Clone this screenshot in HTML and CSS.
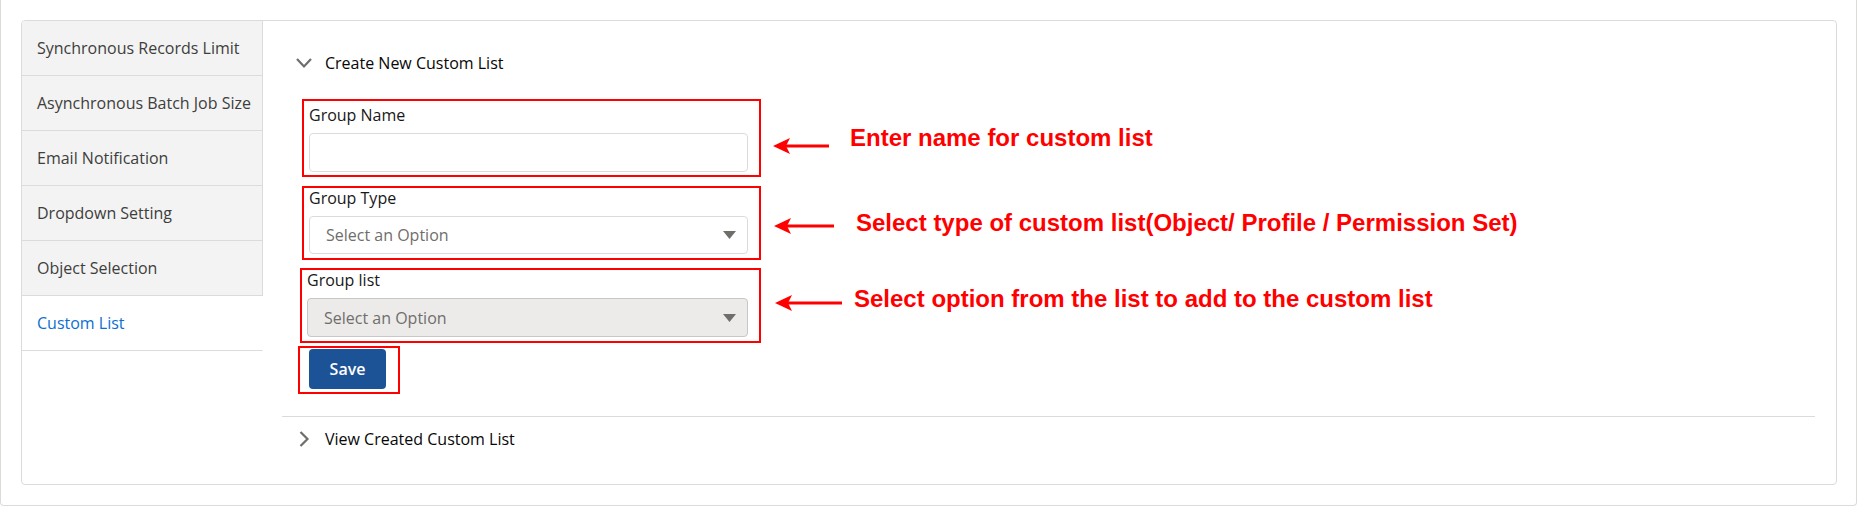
FILE: index.html
```html
<!DOCTYPE html>
<html lang="en">
<head>
    <meta charset="UTF-8">
    <meta name="viewport" content="width=device-width, initial-scale=1.0">
    <title>Custom List Settings</title>
    <link rel="stylesheet" href="styles.css">
</head>
<body>

<div class="page">
    <div class="card">

        <nav class="tabs">
            <a class="tab">Synchronous Records Limit</a>
            <a class="tab">Asynchronous Batch Job Size</a>
            <a class="tab">Email Notification</a>
            <a class="tab">Dropdown Setting</a>
            <a class="tab">Object Selection</a>
            <a class="tab tab-active">Custom List</a>
        </nav>

        <div class="content">
            <section class="section section-open">
                <div class="section-head">
                    <svg class="chevron" width="16" height="16" viewBox="0 0 16 16">
                        <path d="M1 4 L8 11.5 L15 4" fill="none" stroke="#706e6b" stroke-width="2.2"/>
                    </svg>
                    <span>Create New Custom List</span>
                </div>

                <div class="form">
                    <div class="row row-name">
                        <div class="callout callout-name">
                            <label class="field-label">Group Name</label>
                            <input class="input" type="text">
                        </div>
                        <svg class="arrow arrow-name" width="56" height="18" viewBox="0 0 56 18">
                            <path d="M0 9 L17 1 L13 9 L17 17 Z" fill="#ff0000"/>
                            <rect x="12" y="7.5" width="44" height="3" fill="#ff0000"/>
                        </svg>
                        <span class="note note-name">Enter name for custom list</span>
                    </div>

                    <div class="row row-type">
                        <div class="callout">
                            <label class="field-label">Group Type</label>
                            <div class="select">
                                <span>Select an Option</span>
                                <svg width="13" height="8" viewBox="0 0 13 8"><path d="M0 0 H13 L6.5 8 Z" fill="#706e6b"/></svg>
                            </div>
                        </div>
                        <svg class="arrow arrow-type" width="60" height="18" viewBox="0 0 60 18">
                            <path d="M0 9 L17 1 L13 9 L17 17 Z" fill="#ff0000"/>
                            <rect x="12" y="7.5" width="48" height="3" fill="#ff0000"/>
                        </svg>
                        <span class="note note-type">Select type of custom list(Object/ Profile / Permission Set)</span>
                    </div>

                    <div class="row row-list">
                        <div class="callout callout-list">
                            <label class="field-label">Group list</label>
                            <div class="select select-disabled">
                                <span>Select an Option</span>
                                <svg width="13" height="8" viewBox="0 0 13 8"><path d="M0 0 H13 L6.5 8 Z" fill="#706e6b"/></svg>
                            </div>
                        </div>
                        <svg class="arrow arrow-list" width="67" height="18" viewBox="0 0 67 18">
                            <path d="M0 9 L17 1 L13 9 L17 17 Z" fill="#ff0000"/>
                            <rect x="12" y="7.5" width="55" height="3" fill="#ff0000"/>
                        </svg>
                        <span class="note note-list">Select option from the list to add to the custom list</span>
                    </div>

                    <div class="row row-save">
                        <div class="callout callout-save">
                            <button class="btn">Save</button>
                        </div>
                    </div>
                </div>
            </section>

            <section class="section">
                <div class="section-head">
                    <svg class="chevron" width="16" height="16" viewBox="0 0 16 16">
                        <path d="M4.5 1 L11.5 8 L4.5 15" fill="none" stroke="#706e6b" stroke-width="2.2"/>
                    </svg>
                    <span>View Created Custom List</span>
                </div>
            </section>
        </div>

    </div>
</div>

</body>
</html>
```

FILE: styles.css
```css
body {
    margin: 0;
    background: #fff;
    font-family: "Open Sans", Arial, sans-serif;
    font-size: 16px;
    color: #080707;
}

.page {
    margin-right: 1px;
    padding: 20px 19px 20px 20px;
    border: 1px solid #dddbda;
    border-top: none;
    border-radius: 0 0 4px 4px;
}

.card {
    display: flex;
    height: 465px;
    box-sizing: border-box;
    border: 1px solid #dddbda;
    border-radius: 4px;
    overflow: hidden;
}

/* Vertical tabs */
.tabs {
    width: 241px;
    flex-shrink: 0;
}
.tab {
    display: flex;
    align-items: center;
    height: 54px;
    padding-left: 15px;
    background: #f3f3f3;
    border-right: 1px solid #dddbda;
    border-bottom: 1px solid #dddbda;
    color: #3e3e3c;
    cursor: pointer;
}
.tab-active {
    background: #fff;
    border-right-color: transparent;
    color: #0b6fd1;
}

/* Accordion */
.content {
    flex: 1;
    padding: 21px 21px 0 19px;
}
.section-open {
    border-bottom: 1px solid #dddbda;
    padding-bottom: 22px;
}
.section-head {
    display: flex;
    align-items: center;
    gap: 13px;
    height: 42px;
    padding-left: 14px;
    color: #080707;
}
.section-open + .section .section-head {
    height: 44px;
}

/* Form */
.form {
    padding: 15px 0 0 20px;
}
.row {
    display: flex;
    align-items: center;
    margin-bottom: 8px;
}
.row-name {
    margin-bottom: 9px;
}
.row-list {
    margin-bottom: 3px;
}
.row-save {
    margin-bottom: 0;
}
.callout {
    width: 459px;
    box-sizing: border-box;
    border: 2px solid #ff0000;
    padding: 1px 11px 4px 5px;
}
.callout-name {
    padding-top: 5px;
    padding-bottom: 3px;
}
.callout-list {
    margin-left: -2px;
    width: 461px;
}
.callout-save {
    width: auto;
    margin-left: -4px;
    padding: 1px 12px 3px 9px;
}
.field-label {
    display: block;
    line-height: 18px;
    margin-bottom: 9px;
    font-size: 16px;
    color: #181818;
}
.input {
    display: block;
    width: 100%;
    height: 39px;
    box-sizing: border-box;
    border: 1px solid #dddbda;
    border-radius: 4px;
    font-family: inherit;
    font-size: 16px;
}
.select {
    display: flex;
    align-items: center;
    justify-content: space-between;
    height: 38px;
    box-sizing: border-box;
    padding: 0 11px 0 16px;
    border: 1px solid #dddbda;
    border-radius: 4px;
    background: #fff;
    font-size: 16px;
    color: #706e6b;
}
.select-disabled {
    height: 39px;
    background: #ecebea;
    border-color: #c9c7c5;
}
.btn {
    display: block;
    width: 77px;
    height: 40px;
    border: none;
    border-radius: 4px;
    background: #1c5397;
    color: #fff;
    font-family: inherit;
    font-size: 16px;
    font-weight: 600;
    cursor: pointer;
}

/* Red annotations */
.arrow {
    flex-shrink: 0;
}
.arrow-name {
    margin: 16px 0 0 12px;
}
.arrow-type {
    margin: 6px 0 0 13px;
}
.arrow-list {
    margin: 0 0 5px 14px;
}
.note {
    font-family: "Liberation Sans", Arial, sans-serif;
    font-size: 24px;
    font-weight: bold;
    line-height: 28px;
    color: #ff0000;
    white-space: nowrap;
}
.note-name {
    margin-left: 21px;
}
.note-type {
    margin-left: 22px;
}
.note-list {
    margin: 0 0 14px 12px;
}
```
